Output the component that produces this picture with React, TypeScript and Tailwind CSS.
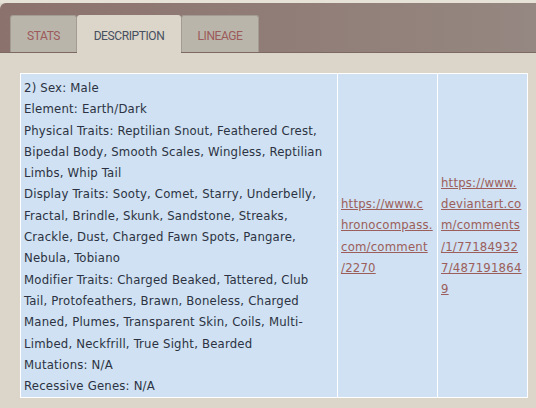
import React from "react";

const col1 = [
  "2) Sex: Male",
  "Element: Earth/Dark",
  "Physical Traits: Reptilian Snout, Feathered Crest,",
  "Bipedal Body, Smooth Scales, Wingless, Reptilian",
  "Limbs, Whip Tail",
  "Display Traits: Sooty, Comet, Starry, Underbelly,",
  "Fractal, Brindle, Skunk, Sandstone, Streaks,",
  "Crackle, Dust, Charged Fawn Spots, Pangare,",
  "Nebula, Tobiano",
  "Modifier Traits: Charged Beaked, Tattered, Club",
  "Tail, Protofeathers, Brawn, Boneless, Charged",
  "Maned, Plumes, Transparent Skin, Coils, Multi-",
  "Limbed, Neckfrill, True Sight, Bearded",
  "Mutations: N/A",
  "Recessive Genes: N/A",
];

const col2 = ["https://www.c", "hronocompass.", "com/comment", "/2270"];
const col3 = ["https://www.", "deviantart.co", "m/comments", "/1/77184932", "7/487191864", "9"];

const bodyFont = { fontFamily: '"DejaVu Sans Condensed", "DejaVu Sans", sans-serif' };

function Lines({ lines, link }: { lines: string[]; link?: boolean }) {
  return (
    <div className="flex flex-col">
      {lines.map((l, i) => (
        <span
          key={i}
          className={
            "whitespace-nowrap leading-[21.3px] tracking-[0.2px] " +
            (link ? "text-[#9c5e5a] underline decoration-[#9c5e5a]" : "text-[#2c3242]")
          }
        >
          {l}
        </span>
      ))}
    </div>
  );
}

export default function App() {
  return (
    <div className="w-[536px] h-[408px] bg-[#dbd5ca] overflow-hidden">
      <div className="h-[3px] bg-[#e6e2d7]" />
      <div className="h-[50px] rounded-tl-[6px] bg-gradient-to-r from-[#8c726d] to-[#958781] border-b border-[#7d6964] flex items-end pl-[10px]">
        <div
          className="flex items-end"
          style={{ fontFamily: 'Roboto, "Liberation Sans", sans-serif' }}
        >
          <div className="w-[67px] h-[37px] pt-[3px] bg-[#b9b5ab] border border-b-0 border-[#a39c94] rounded-t-[3px] flex items-center justify-center text-[12px] text-[#9c5a5a] tracking-[-0.4px]">
            STATS
          </div>
          <div className="w-[104px] h-[38px] pt-[3px] bg-[#dbd5ca] rounded-t-[3px] flex items-center justify-center text-[12px] text-[#46505e] tracking-[-0.4px] -mb-px">
            DESCRIPTION
          </div>
          <div className="w-[78px] h-[37px] pt-[3px] bg-[#b9b5ab] border border-b-0 border-[#a39c94] rounded-t-[3px] flex items-center justify-center text-[12px] text-[#9c5a5a] tracking-[-0.4px]">
            LINEAGE
          </div>
        </div>
      </div>
      <div className="pt-[20px] pl-[20px]">
        <div
          className="w-[508px] bg-white p-px grid grid-cols-[316px_99px_89px] gap-px text-[13px]"
          style={bodyFont}
        >
          <div className="bg-[#cfe1f2] pl-[3px] pt-[3px] pb-[1px]">
            <Lines lines={col1} />
          </div>
          <div className="bg-[#cfe1f2] pl-[3px] flex items-center">
            <Lines lines={col2} link />
          </div>
          <div className="bg-[#cfe1f2] pl-[3px] flex items-center">
            <Lines lines={col3} link />
          </div>
        </div>
      </div>
    </div>
  );
}
